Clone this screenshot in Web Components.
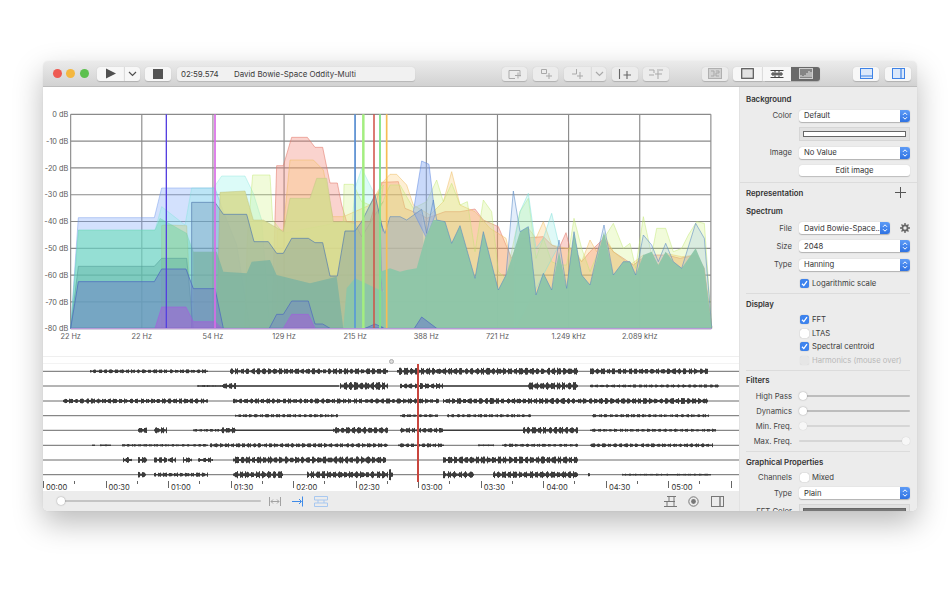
<!DOCTYPE html>
<html>
<head>
<meta charset="utf-8">
<title>Spectrum</title>
<style>
  html, body { margin: 0; padding: 0; background: #fff; height: 100%; overflow: hidden; }
  body { font-family: Inter, "Liberation Sans", sans-serif; }
</style>
</head>
<body>
<app-window>
  <tool-bar slot="toolbar"></tool-bar>
  <spectrum-chart slot="main"></spectrum-chart>
  <wave-tracks slot="main"></wave-tracks>
  <time-ruler slot="main"></time-ruler>
  <bottom-bar slot="main"></bottom-bar>
  <side-panel slot="side">
    <insp-section first style="padding-top:6px;padding-bottom:4px">
      <insp-title>Background</insp-title>
      <insp-row label="Color" h="21"><insp-select>Default</insp-select></insp-row>
      <insp-row h="16"><insp-swatch></insp-swatch></insp-row>
      <insp-row label="Image" h="21"><insp-select>No Value</insp-select></insp-row>
      <insp-row h="15"><insp-button>Edit image</insp-button></insp-row>
    </insp-section>
    <insp-section>
      <insp-title h="19" plus>Representation</insp-title>
      <insp-title h="18">Spectrum</insp-title>
      <insp-row label="File" h="16"><insp-select gear>David Bowie-Space...</insp-select></insp-row>
      <insp-row label="Size" h="20"><insp-select>2048</insp-select></insp-row>
      <insp-row label="Type" h="17"><insp-select>Hanning</insp-select></insp-row>
      <insp-row h="20"><insp-check on>Logarithmic scale</insp-check></insp-row>
    </insp-section>
    <insp-section style="padding-top:1px;padding-bottom:3px">
      <insp-title h="17">Display</insp-title>
      <insp-row h="14"><insp-check on>FFT</insp-check></insp-row>
      <insp-row h="14"><insp-check>LTAS</insp-check></insp-row>
      <insp-row h="13"><insp-check on>Spectral centroid</insp-check></insp-row>
      <insp-row h="14"><insp-check off>Harmonics (mouse over)</insp-check></insp-row>
    </insp-section>
    <insp-section style="padding-top:1px;padding-bottom:2.5px">
      <insp-title h="16.5">Filters</insp-title>
      <insp-row label="High Pass" h="15"><insp-slider></insp-slider></insp-row>
      <insp-row label="Dynamics" h="15"><insp-slider></insp-slider></insp-row>
      <insp-row label="Min. Freq." h="15"><insp-slider off></insp-slider></insp-row>
      <insp-row label="Max. Freq." h="15"><insp-slider off end></insp-slider></insp-row>
    </insp-section>
    <insp-section style="padding-top:1.5px">
      <insp-title h="17.5">Graphical Properties</insp-title>
      <insp-row label="Channels" h="13"><insp-check>Mixed</insp-check></insp-row>
      <insp-row label="Type" h="18"><insp-select>Plain</insp-select></insp-row>
      <insp-row label="FFT Color" h="18"><insp-swatch dark></insp-swatch></insp-row>
    </insp-section>
  </side-panel>
</app-window>

<script>
class AppWindow extends HTMLElement {
  constructor() {
    super();
    this.attachShadow({ mode: "open" });
    this.shadowRoot.innerHTML = `
      <style>
        :host { display: flex; flex-direction: column; width: 874px; height: 450px; margin: 61px 0 0 43px;
          border-radius: 5px; overflow: hidden; background: #fff; color: #333;
          box-shadow: 0 12px 30px rgba(0,0,0,.27), 0 0 1px rgba(0,0,0,.12); }
        #body { flex: 1; display: flex; min-height: 0; }
        #main { width: 696px; display: flex; flex-direction: column; }
        #side { flex: 1; min-width: 0; }
      </style>
      <slot name="toolbar"></slot>
      <div id="body">
        <div id="main"><slot name="main"></slot></div>
        <div id="side"><slot name="side"></slot></div>
      </div>`;
  }
}

class ToolBtn extends HTMLElement {
  constructor() {
    super();
    this.attachShadow({ mode: "open" });
    this.shadowRoot.innerHTML = `
      <style>
        :host { display: flex; align-items: center; justify-content: center; height: 14px; box-sizing: border-box;
          background: #f7f7f7; border-radius: 3px; box-shadow: 0 .5px 1px rgba(0,0,0,.18); flex: none; }
        :host([dim]) { background: #ececec; }
        :host([dark]) { background: #696969; border-radius: 0 3px 3px 0; }
        :host([l]) { border-radius: 3px 0 0 3px; }
        :host([m]) { border-radius: 0; }
        :host([r]) { border-radius: 0 3px 3px 0; }
        :host([sep]) { border-left: 1px solid #dcdcdc; }
      </style>
      <slot></slot>`;
    this.style.width = this.getAttribute("w") + "px";
  }
}

class ToolBar extends HTMLElement {
  constructor() {
    super();
    this.attachShadow({ mode: "open" });
    const s = 'fill="none" stroke="#a9a9a9" stroke-width="1"';
    const chev = (c) => `<svg width="9" height="6" viewBox="0 0 9 6"><path d="M1 1l3.5 3.5L8 1" fill="none" stroke="${c}" stroke-width="1.2"/></svg>`;
    this.shadowRoot.innerHTML = `
      <style>
        :host { display: flex; align-items: center; height: 26px; box-sizing: border-box; padding-left: 9.5px;
          background: linear-gradient(#ebebeb, #d2d2d2); border-bottom: 1px solid #bdbdbd; }
        .light { width: 9px; height: 9px; border-radius: 50%; margin-right: 4.5px; flex: none; }
        #time { width: 238px; height: 14px; margin-left: 6px; background: #f1f1f1; border-radius: 3px; display: flex; align-items: center;
          font-size: 7.9px; color: #3a3a3a; box-sizing: border-box; padding-left: 4px; box-shadow: 0 .5px 1px rgba(0,0,0,.15); }
        #time b { font-weight: 400; width: 53px; }
        svg { display: block; }
        .g { display: flex; }
      </style>
      <span class="light" style="background:#ee5a52"></span>
      <span class="light" style="background:#f4b73f"></span>
      <span class="light" style="background:#5cc04e;margin-right:8.5px"></span>
      <div class="g">
        <tool-btn w="27" l><svg width="12" height="11" viewBox="0 0 12 11"><path d="M1 .5L11 5.5L1 10.5z" fill="#505050"/></svg></tool-btn>
        <tool-btn w="16" r sep>${chev("#505050")}</tool-btn>
      </div>
      <tool-btn w="26" style="margin-left:5px"><svg width="10" height="10"><rect width="10" height="10" fill="#555"/></svg></tool-btn>
      <div id="time"><b>02:59.574</b><span>David Bowie-Space Oddity-Multi</span></div>
      <tool-btn dim w="25" style="margin-left:87px"><svg width="18" height="12" viewBox="0 0 18 12"><path d="M3 2.5h11v6M3 2.5v8h6M12 4.5v6M9 7.5h6" ${s}/></svg></tool-btn>
      <tool-btn dim w="25" style="margin-left:6px"><svg width="16" height="12" viewBox="0 0 16 12"><path d="M3.5 1.5h5v4h-5zM11 5v6M8 8h6" ${s}/></svg></tool-btn>
      <div class="g" style="margin-left:6px">
        <tool-btn dim w="27" l><svg width="16" height="12" viewBox="0 0 16 12"><path d="M6.5 1v5H2M10 4v7M7 8h6" ${s}/></svg></tool-btn>
        <tool-btn dim w="15" r sep>${chev("#a9a9a9")}</tool-btn>
      </div>
      <tool-btn dim w="26" style="margin-left:6px"><svg width="16" height="12" viewBox="0 0 16 12"><path d="M2.5 1v10M10 3v8M6.5 7h7.5" fill="none" stroke="#666" stroke-width="1.1"/></svg></tool-btn>
      <tool-btn dim w="26" style="margin-left:5px"><svg width="18" height="12" viewBox="0 0 18 12"><path d="M2 2h5v3M2 7h5M11 1v10M8 6h7M12 2h4" ${s}/></svg></tool-btn>
      <tool-btn dim w="26" style="margin-left:33px"><svg width="14" height="11" viewBox="0 0 14 11"><rect x=".5" y=".5" width="13" height="10" fill="#d2d2d2" stroke="#b0b0b0"/><path d="M3 3h3v5H3M8 3h3v2H8v3h3" ${s}/></svg></tool-btn>
      <div class="g" style="margin-left:5px">
        <tool-btn w="29" l><svg width="13" height="11" viewBox="0 0 13 11"><rect x=".7" y=".7" width="11.6" height="9.6" fill="#e2e2e2" stroke="#555" stroke-width="1.2"/></svg></tool-btn>
        <tool-btn w="29" m sep><svg width="14" height="10" viewBox="0 0 14 10"><path d="M.5 1.5h13M.5 8.5h13" stroke="#444"/><path d="M1 5h12M3 3v4M5 2v6M7 3.5v3M9 2v6M11 3v4" stroke="#333" fill="none"/></svg></tool-btn>
        <tool-btn w="29" dark><svg width="14" height="11" viewBox="0 0 14 11"><rect x=".5" y=".5" width="13" height="10" fill="#858585" stroke="#cfcfcf"/><path d="M2 9V7M4 9V8M6 9V7M8 9V5M10 9V3M12 9V4" stroke="#e6e6e6"/></svg></tool-btn>
      </div>
      <tool-btn w="26" style="margin-left:33px"><svg width="13" height="11" viewBox="0 0 13 11"><rect x=".5" y=".5" width="12" height="10" fill="#dce9fb" stroke="#3f83e6"/><path d="M0 8h13" stroke="#3f83e6" stroke-width="1.2"/></svg></tool-btn>
      <tool-btn w="26" style="margin-left:6px"><svg width="13" height="11" viewBox="0 0 13 11"><rect x=".5" y=".5" width="12" height="10" fill="#dce9fb" stroke="#3f83e6"/><path d="M9 0v11" stroke="#3f83e6" stroke-width="1.2"/></svg></tool-btn>`;
  }
}

// shapes are noted in 3x units; the second list carries on 990 units further right
const GREEN_EDGE = "0,500 30,490 60,500 80,495 110,490 135,400 160,345 170,345 195,350 215,415 240,362 285,520 310,380 355,555 378,510 395,460 420,380 445,365 468,570 490,505 515,555 537,440 560,550 582,380 605,510 630,540 672,380 700,510 730,470 750,470 767,510 790,450 815,440 835,480 857,440 880,470 905,490 947,430 973,490 995,665 995,670";
const BLUE_EDGE = "15,385 30,335 60,335 80,345 125,313 140,385 160,285 170,345 195,350 215,415 240,362 285,520 310,380 355,555 378,510 400,258 420,380 445,365 468,570 490,505 515,555 537,405 560,550 582,380 605,510 630,540 672,360 700,510 730,470 750,470 767,510 790,390 815,420 835,470 857,415 880,470 905,490 947,355 973,400 995,665 995,670";
const SERIES = [
  { fill: "rgba(120,165,250,.33)", line: "rgba(110,150,235,.45)",
    left: "62,670 85,338 313,338 335,249 495,249 520,320 560,420 600,670", right: "" },
  { fill: "rgba(125,240,230,.27)", line: "rgba(120,225,215,.35)",
    left: "62,670 85,375 315,375 335,305 405,360 425,249 490,249 515,213 585,213 610,265 635,345 660,670 880,670 915,250 935,190 975,270 990,670", right: "" },
  { fill: "rgba(240,125,110,.34)", line: "rgba(225,120,105,.55)",
    left: "665,670 680,182 700,182 725,97 772,97 795,127 818,127 840,234 862,234 875,300 890,350 960,350 990,250",
    right: "5,232 55,230 75,310 125,330 140,340 195,320 240,320 285,312 310,345 355,365 378,420 395,460 420,400 490,395 515,420 537,430 558,383 570,430 605,470 630,440 672,400 700,440 760,480 800,450 860,450 900,460 950,450 973,490 995,665 995,670" },
  { fill: "rgba(250,195,95,.27)", line: "rgba(240,190,100,.5)",
    left: "680,670 682,375 700,375 720,165 790,165 820,195 848,335 880,335 960,300 1000,230",
    right: "30,208 50,208 80,240 100,300 150,330 190,290 215,200 240,300 285,320 330,370 378,400 400,500 445,370 468,400 490,350 515,420 560,430 582,430 605,470 630,405 650,440 672,390 700,440 750,480 790,450 835,480 857,445 880,450 905,455 950,450 973,500 995,665 995,670" },
  { fill: "rgba(205,240,120,.27)", line: "rgba(190,230,110,.45)",
    left: "585,670 592,400 608,210 660,210 668,345 700,385 880,350 882,238 910,238 935,290 960,300 1000,240",
    right: "0,310 30,240 60,240 100,310 140,290 170,225 190,290 215,235 240,300 262,290 285,440 310,285 335,320 355,500 378,520 420,320 445,280 468,460 490,400 515,470 537,480 560,480 582,340 605,430 630,500 672,400 700,355 730,430 750,415 767,490 790,335 815,450 830,370 857,370 880,440 905,430 925,390 950,350 973,355 995,665 995,670" },
  // pale cyan peaks that stand above the green on the right half
  { fill: "rgba(150,235,230,.3)", line: "rgba(130,225,220,.5)",
    left: "", right: "405,400 420,320 445,265 468,430 490,400 515,325 537,420 405,670" },
  { fill: "rgba(205,205,135,.42)", line: "rgba(180,185,120,.35)",
    left: "335,670 335,362 345,360 410,362 425,670", right: "" },
  { fill: "rgba(214,220,145,.88)", line: "rgba(190,195,130,.45)",
    left: "500,670 510,262 585,258 610,345 640,345 700,380 720,280 780,280 800,220 830,220 850,350 885,350 915,355 935,395 975,330 1000,290",
    right: "0,300 10,670" },
  { fill: "rgba(95,215,165,.42)", line: "rgba(95,200,160,.2)",
    left: "62,670 85,375 315,375 330,340 410,385 430,440 430,670", right: "" },
  { fill: "rgba(130,200,160,.72)", line: "none",
    left: "430,670 430,440 500,440 520,500 590,505 605,470 660,465 680,510 780,535 860,515 880,670", right: "" },
  { fill: "rgba(80,165,150,.33)", line: "rgba(80,155,150,.5)",
    left: "62,670 85,484 313,484 335,460 410,460 430,670", right: "" },
  { fill: "rgba(90,130,165,.3)", line: "rgba(85,125,175,.7)",
    left: "425,670 425,292 495,292 520,328 590,328 612,410 655,410 680,445 700,445 725,400 775,400 795,413 818,413 840,513 862,513 885,378 915,378 935,350 975,270 1000,380",
    right: "0,350 10,670" },
  { fill: "rgba(190,180,150,.55)", line: "none",
    left: "", right: "0,350 15,385 30,335 60,335 80,345 125,313 135,510 0,510" },
  { fill: "rgba(150,190,240,.26)", line: "none",
    left: "990,670 990,350", right: BLUE_EDGE },
  { fill: "rgba(135,170,245,.45)", line: "rgba(100,140,225,.55)",
    left: "", right: "100,320 125,168 147,178 165,330 140,400" },
  { fill: "rgba(141,198,168,.96)", line: "none",
    left: "880,670 890,550 915,520 1000,560", right: GREEN_EDGE },
  { fill: "none", line: "rgba(85,135,195,.55)",
    left: "990,670 990,350", right: BLUE_EDGE },
  { fill: "rgba(110,130,200,.5)", line: "rgba(80,110,190,.8)",
    left: "62,670 85,530 313,530 335,492 408,492 430,551 495,551 520,670", right: "" },
  { fill: "rgba(110,130,200,.45)", line: "rgba(80,110,190,.75)",
    left: "658,670 680,628 700,628 725,588 775,588 795,657 818,657 840,670", right: "" },
  { fill: "rgba(110,130,200,.6)", line: "rgba(80,110,190,.75)",
    left: "945,670 975,657 1000,668", right: "" },
  { fill: "rgba(110,130,200,.6)", line: "rgba(80,110,190,.75)",
    left: "", right: "103,670 125,636 170,670" },
  { fill: "rgba(170,90,220,.5)", line: "rgba(165,90,225,.55)",
    left: "315,670 335,606 408,606 430,650 495,650 515,670", right: "" },
  { fill: "rgba(170,90,220,.5)", line: "rgba(165,90,225,.55)",
    left: "700,670 725,628 775,628 795,670", right: "" },
];

class SpectrumChart extends HTMLElement {
  constructor() {
    super();
    this.attachShadow({ mode: "open" });
    const X0 = 62, STEP = 213.4, Y0 = 28, YSTEP = 80.4;
    let grid = "", labels = "", shapes = "";
    for (let i = 0; i <= 9; i++) {
      const x = X0 + i * STEP;
      grid += `<path d="M${x} ${Y0}V${Y0 + 8 * YSTEP}" stroke="#8a8a8a" stroke-width="3.4"/>`;
    }
    for (let i = 0; i <= 8; i++) {
      const y = Y0 + i * YSTEP;
      grid += `<path d="M${X0} ${y}H${X0 + 9 * STEP}" stroke="#8a8a8a" stroke-width="3.4"/>`;
      labels += `<text x="55" y="${y + 8}" text-anchor="end">${i ? "-" + i * 10 : 0} dB</text>`;
    }
    ["22 Hz", "22 Hz", "54 Hz", "129 Hz", "215 Hz", "388 Hz", "721 Hz", "1.249 kHz", "2.089 kHz"].forEach((t, i) => {
      labels += `<text x="${X0 + i * STEP}" y="702" text-anchor="middle">${t}</text>`;
    });
    for (const s of SERIES) {
      const right = s.right.trim() ? s.right.trim().split(" ").map((p) => {
        const [a, b] = p.split(",");
        return (+a + 990) + "," + b;
      }).join(" ") : "";
      shapes += `<polygon points="${s.left} ${right}" fill="${s.fill}" stroke="${s.line}" stroke-width="3"/>`;
    }
    const marks = [[349, "#5540e0", 4], [495, "#d96ae6", 5], [915, "#4a8fe4", 4], [940, "#a4ee80", 7.5], [972, "#cf4f46", 4.5], [990, "#82e488", 5.5], [1010, "#f6bd55", 5]]
      .map(([x, c, w]) => `<path d="M${x} ${Y0}V670" stroke="${c}" stroke-width="${w}"/>`).join("");
    this.shadowRoot.innerHTML = `
      <style>
        :host { display: block; height: 269px; background: #fff; }
        svg { display: block; }
        text { font-size: 22px; fill: #5a5a5a; font-family: Inter, "Liberation Sans", sans-serif; }
      </style>
      <svg width="696" height="269" viewBox="0 0 2088 807">
        <g transform="translate(21 54)">
          ${grid}${shapes}${marks}
          <path d="M62 671H1985" stroke="#b79ad6" stroke-width="3.5"/>
          ${labels}
        </g>
      </svg>`;
  }
}

// x positions are on the page; amp is half the height of the wave
const TRACKS = [
  [[90, 207, 2], [230, 387, 3], [397, 577, 3.6], [590, 707, 3]],
  [[197, 222, 1], [222, 235, 3], [235, 338, .6], [340, 387, 4], [400, 442, 3], [442, 527, .6], [528, 577, 4], [590, 718, 1.6]],
  [[63, 207, 2.6], [233, 390, 2.6], [390, 438, 2.6], [443, 707, 3]],
  [[235, 337, 1.6], [400, 437, 1.6], [447, 530, 1.6], [592, 708, 1.6]],
  [[138, 146, 3.6], [154, 166, 3.2], [193, 222, 1.4], [222, 235, 3], [235, 332, .6], [333, 387, 3.4], [400, 442, 2.6], [442, 522, .5], [523, 577, 3.4], [590, 715, 1.6]],
  [[92, 94, 1], [100, 110, 1], [122, 207, 1.3], [210, 387, 2.2], [398, 443, 2], [478, 493, 1], [502, 577, 1.6], [590, 712, 2]],
  [[123, 131, 3], [138, 146, 3], [154, 166, 3], [168, 175, 3], [183, 191, 3], [198, 212, 2.6], [233, 385, 3.6], [443, 577, 3.6]],
  [[138, 145, 3], [154, 207, 2.2], [233, 282, 3.6], [307, 387, 3.6], [389, 392, 6], [443, 473, 3.6], [493, 577, 3.6], [588, 589, 4], [622, 710, 1]],
];
const ROWS = [7.3, 22, 37, 51.7, 66.3, 81.3, 96, 110.7];

class WaveTracks extends HTMLElement {
  constructor() {
    super();
    this.attachShadow({ mode: "open" });
    let seed = 7;
    const rnd = () => (seed = (seed * 16807) % 2147483647) / 2147483647;
    let d = "", base = "";
    TRACKS.forEach((regions, i) => {
      const y = ROWS[i];
      base += `M0 ${y}H696`;
      for (const [a, b, amp] of regions) {
        for (let x = a; x <= b; x += 1) {
          const beat = Math.sin(x * 1.15 + i) > -0.35 ? 1 : .45;
          const h = Math.max(.7, amp * beat * (.6 + .4 * rnd()));
          d += `M${x - 43 + .5} ${(y - h).toFixed(1)}V${(y + h).toFixed(1)}`;
        }
      }
    });
    this.shadowRoot.innerHTML = `
      <style>
        :host { display: block; height: 125px; position: relative; background: #fff; box-sizing: border-box; padding-top: 7px; border-top: 1px solid #efefef; }
        svg { display: block; }
        #grip { position: absolute; left: 346px; top: 2px; width: 3px; height: 3px; border-radius: 50%; border: .5px solid #aaa; background: #ddd; }
        #head { position: absolute; left: 374px; top: 7px; width: 1.5px; height: 118px; background: #c9463e; }
      </style>
      <div id="grip"></div>
      <svg width="696" height="118" viewBox="0 0 696 118" style="border-top:1px solid #f3f3f3;margin-top:-1px">
        <path d="${base}" stroke="#6a6a6a" stroke-width="1" fill="none"/>
        <path d="${d}" stroke="#3b3b3b" stroke-width="1" fill="none"/>
      </svg>
      <div id="head"></div>`;
  }
}

class TimeRuler extends HTMLElement {
  constructor() {
    super();
    this.attachShadow({ mode: "open" });
    const times = ["00:00", "00:30", "01:00", "01:30", "02:00", "02:30", "03:00", "03:30", "04:00", "04:30", "05:00"];
    this.shadowRoot.innerHTML = `
      <style>
        :host { display: flex; height: 10px; background: #fff; overflow: hidden; }
        span { flex: none; width: 62.55px; box-sizing: border-box; padding: 2.5px 0 0 3px; font-size: 7.6px; line-height: 8px; color: #333;
          background: linear-gradient(#666,#666) 0 0/1px 7px no-repeat, linear-gradient(#666,#666) 31px 0/1px 3px no-repeat; }
      </style>
      ${times.map((t) => `<span>${t}</span>`).join("")}<span></span>`;
  }
}

class BottomBar extends HTMLElement {
  constructor() {
    super();
    this.attachShadow({ mode: "open" });
    const g = 'fill="none" stroke="#a2a2a2" stroke-width="1"';
    const b = 'fill="none" stroke="#3f8be8" stroke-width="1"';
    const k = 'fill="none" stroke="#777" stroke-width="1"';
    this.shadowRoot.innerHTML = `
      <style>
        :host { display: flex; align-items: center; height: 20px; background: #ececec; padding: 0 15px 0 14px; box-sizing: border-box; }
        #track { width: 204px; height: 2px; background: #c4c4c4; position: relative; border-radius: 1px; }
        #knob { position: absolute; left: 0; top: -3px; width: 8px; height: 8px; border-radius: 50%; background: #fff; box-shadow: 0 0 1.5px rgba(0,0,0,.45); }
        svg { display: block; flex: none; }
      </style>
      <div id="track"><div id="knob"></div></div>
      <svg style="margin-left:8px" width="12" height="11" viewBox="0 0 12 11"><path d="M.5 1v9M11.5 1v9M2 5.5h8M4 3.5l-2 2 2 2M8 3.5l2 2-2 2" ${g}/></svg>
      <svg style="margin-left:11px" width="12" height="11" viewBox="0 0 12 11"><path d="M0 5.5h9M7 3l2.5 2.5L7 8M10.5 .5v10" ${b}/></svg>
      <svg style="margin-left:10px" width="14" height="11" viewBox="0 0 14 11"><path d="M.5 .5h13v3.5H.5zM.5 7h13v3.5H.5zM4 4v3M10 4v3" fill="none" stroke="#a8c8f0" stroke-width="1"/></svg>
      <svg style="margin-left:auto" width="13" height="11" viewBox="0 0 13 11"><path d="M3 .5h9M5 .5v5M10 .5v5M0 5.5h11M3 5.5v5M10 5.5v5M0 10.5h13" ${k}/></svg>
      <svg style="margin-left:11px" width="11" height="11" viewBox="0 0 11 11"><circle cx="5.5" cy="5.5" r="4.7" ${k}/><circle cx="5.5" cy="5.5" r="2.4" fill="#777"/></svg>
      <svg style="margin-left:12px" width="13" height="11" viewBox="0 0 13 11"><rect x=".5" y=".5" width="12" height="10" ${k}/><path d="M9 .5v10" stroke="#777" stroke-width="1.4"/></svg>`;
  }
}

class SidePanel extends HTMLElement {
  constructor() {
    super();
    this.attachShadow({ mode: "open" });
    this.shadowRoot.innerHTML = `
      <style>:host { display: block; height: 424px; overflow: hidden; background: #ececec; border-left: 1px solid #e2e2e2; font-size: 7.7px; color: #3a3a3a; }</style>
      <slot></slot>`;
  }
}

class InspSection extends HTMLElement {
  constructor() {
    super();
    this.attachShadow({ mode: "open" });
    this.shadowRoot.innerHTML = `
      <style>
        :host { display: block; padding: 0; border-bottom: 1px solid #dcdcdc; margin: 0 7px 0 6px; }
        :host([first]) { margin: 0; padding-left: 6px; padding-right: 7px; }
        :host(:last-child) { border-bottom: 0; }
      </style>
      <slot></slot>`;
  }
}

class InspTitle extends HTMLElement {
  constructor() {
    super();
    this.attachShadow({ mode: "open" });
    this.shadowRoot.innerHTML = `
      <style>
        :host { display: flex; align-items: center; justify-content: space-between; height: 12px; font-weight: 600; font-size: 7.8px; color: #333; }
        svg { margin-right: 4px; }
      </style>
      <slot></slot>
      ${this.hasAttribute("plus") ? '<svg width="11" height="11" viewBox="0 0 11 11"><path d="M5.5 0v11M0 5.5h11" stroke="#555" stroke-width="1"/></svg>' : ""}`;
    if (this.hasAttribute("h")) this.style.height = this.getAttribute("h") + "px";
  }
}

class InspRow extends HTMLElement {
  constructor() {
    super();
    this.attachShadow({ mode: "open" });
    const label = this.getAttribute("label") || "";
    this.shadowRoot.innerHTML = `
      <style>
        :host { display: flex; align-items: center; }
        #label { flex: none; width: 46px; margin-right: 7px; text-align: right; white-space: nowrap; color: #444; }
        #ctl { flex: 1; min-width: 0; display: flex; align-items: center; }
      </style>
      <div id="label">${label}</div>
      <div id="ctl"><slot></slot></div>`;
    this.style.height = this.getAttribute("h") + "px";
  }
}

class InspSelect extends HTMLElement {
  constructor() {
    super();
    this.attachShadow({ mode: "open" });
    this.shadowRoot.innerHTML = `
      <style>
        :host { display: flex; flex: 1; align-items: center; min-width: 0; }
        #box { flex: 1; min-width: 0; height: 12px; display: flex; align-items: center; background: #fff; border-radius: 3px; box-shadow: 0 .5px 1px rgba(0,0,0,.25);
          padding-left: 5px; overflow: hidden; color: #333; white-space: nowrap; }
        #text { flex: 1; min-width: 0; overflow: hidden; }
        #step { width: 10px; height: 12px; flex: none; background: linear-gradient(#5d9bf6, #2f72e2); display: flex; align-items: center; justify-content: center; }
        svg { display: block; }
        #gear { margin: 0 0 0 10px; flex: none; }
      </style>
      <div id="box"><span id="text"><slot></slot></span>
        <div id="step"><svg width="6" height="10" viewBox="0 0 6 10"><path d="M1 3.8L3 1.8L5 3.8M1 6.2L3 8.2L5 6.2" fill="none" stroke="#fff" stroke-width="1"/></svg></div>
      </div>
      ${this.hasAttribute("gear") ? '<svg id="gear" width="10" height="10" viewBox="0 0 10 10"><circle cx="5" cy="5" r="2.6" fill="none" stroke="#666" stroke-width="1.8"/><path d="M5 0v2M5 8v2M0 5h2M8 5h2M1.5 1.5l1.4 1.4M7.1 7.1l1.4 1.4M8.5 1.5L7.1 2.9M2.9 7.1L1.5 8.5" stroke="#666" stroke-width="1.4"/></svg>' : ""}`;
  }
}

class InspSwatch extends HTMLElement {
  constructor() {
    super();
    this.attachShadow({ mode: "open" });
    this.shadowRoot.innerHTML = `
      <style>
        :host { display: block; flex: 1; height: 13.5px; box-sizing: border-box; padding: 3px 3px; background: #e2e2e2; border: 1px solid #d6d6d6; }
        div { height: 100%; box-sizing: border-box; background: #fff; border: 1.2px solid #666; }
        :host([dark]) div { background: #777; }
      </style>
      <div></div>`;
  }
}

class InspButton extends HTMLElement {
  constructor() {
    super();
    this.attachShadow({ mode: "open" });
    this.shadowRoot.innerHTML = `
      <style>:host { display: block; flex: 1; height: 11px; line-height: 11px; text-align: center; background: #fff; border-radius: 3px; box-shadow: 0 .5px 1px rgba(0,0,0,.2); color: #333; }</style>
      <slot></slot>`;
  }
}

class InspCheck extends HTMLElement {
  constructor() {
    super();
    this.attachShadow({ mode: "open" });
    this.shadowRoot.innerHTML = `
      <style>
        :host { display: flex; align-items: center; margin-left: 1px; white-space: nowrap; color: #3a3a3a; }
        :host([off]) { color: #b9b9b9; }
        #b { width: 9px; height: 9px; border-radius: 2.5px; background: #fff; box-shadow: 0 0 1px rgba(0,0,0,.4); margin-right: 3px; flex: none; display: flex; align-items: center; justify-content: center; }
        :host([on]) #b { background: #3d83ee; }
        :host([off]) #b { background: #e6e6e6; box-shadow: 0 0 1px rgba(0,0,0,.15); }
        svg { display: none; }
        :host([on]) svg { display: block; }
      </style>
      <span id="b"><svg width="7" height="7" viewBox="0 0 7 7"><path d="M1 3.8L2.8 5.6L6 1.2" fill="none" stroke="#fff" stroke-width="1.3"/></svg></span>
      <slot></slot>`;
  }
}

class InspSlider extends HTMLElement {
  constructor() {
    super();
    this.attachShadow({ mode: "open" });
    this.shadowRoot.innerHTML = `
      <style>
        :host { display: flex; flex: 1; height: 9px; align-items: center; position: relative; }
        #t { flex: 1; height: 1.5px; background: #bdbdbd; border-radius: 1px; }
        #k { position: absolute; left: 0; top: .5px; width: 8px; height: 8px; border-radius: 50%; background: #fff; box-shadow: 0 0 1.5px rgba(0,0,0,.4); }
        :host([off]) #t { background: #d6d6d6; }
        :host([off]) #k { background: #f7f7f7; box-shadow: 0 0 1px rgba(0,0,0,.2); }
        :host([end]) #k { left: auto; right: 0; }
      </style>
      <div id="t"></div><div id="k"></div>`;
  }
}

customElements.define("tool-btn", ToolBtn);
customElements.define("tool-bar", ToolBar);
customElements.define("spectrum-chart", SpectrumChart);
customElements.define("wave-tracks", WaveTracks);
customElements.define("time-ruler", TimeRuler);
customElements.define("bottom-bar", BottomBar);
customElements.define("insp-section", InspSection);
customElements.define("insp-title", InspTitle);
customElements.define("insp-row", InspRow);
customElements.define("insp-select", InspSelect);
customElements.define("insp-swatch", InspSwatch);
customElements.define("insp-button", InspButton);
customElements.define("insp-check", InspCheck);
customElements.define("insp-slider", InspSlider);
customElements.define("side-panel", SidePanel);
customElements.define("app-window", AppWindow);
</script>
</body>
</html>
